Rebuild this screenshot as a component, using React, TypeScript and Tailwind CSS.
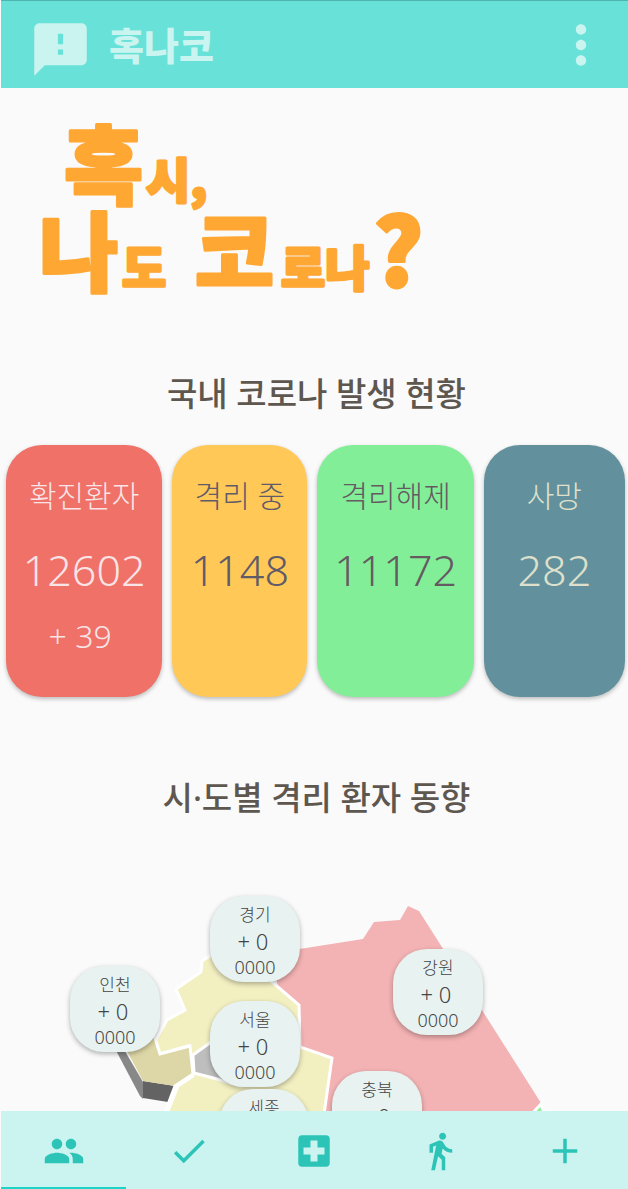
import {
  MdAdd,
  MdDirectionsWalk,
  MdDone,
  MdFeedback,
  MdLocalHospital,
  MdMoreVert,
  MdPeople,
} from "react-icons/md";
import type { IconType } from "react-icons";

const stats = [
  { label: "확진환자", value: "12602", delta: "+ 39", tone: "bg-[#ef7168] text-[#f8e4e6]" },
  { label: "격리 중", value: "1148", tone: "bg-[#ffc857] text-[#5f5b68]" },
  { label: "격리해제", value: "11172", tone: "bg-[#82ef98] text-[#655a62]" },
  { label: "사망", value: "282", tone: "bg-[#62919d] text-[#dfe0cc]" },
];

const regions = [
  { name: "경기", place: "left-[209px] top-0" },
  { name: "인천", place: "left-[69px] top-[70px]" },
  { name: "강원", place: "left-[392px] top-[53px]" },
  { name: "서울", place: "left-[209px] top-[105px]" },
  { name: "충북", place: "left-[331px] top-[175px]" },
  { name: "세종", place: "left-[218px] top-[193px]" },
];

const tabs: { label: string; Icon: IconType; active?: boolean }[] = [
  { label: "현황", Icon: MdPeople, active: true },
  { label: "자가진단", Icon: MdDone },
  { label: "진료소", Icon: MdLocalHospital },
  { label: "동선", Icon: MdDirectionsWalk },
  { label: "더보기", Icon: MdAdd },
];

function Logo() {
  return (
    <svg
      viewBox="0 0 400 180"
      className="ml-[31px] mt-8 block h-[180px] w-[400px] overflow-visible fill-[#ffa733] stroke-[#ffa733] font-['Noto_Sans_CJK_KR',sans-serif] font-black"
      strokeWidth="3"
      strokeLinejoin="round"
      role="img"
      aria-label="혹시, 나도 코로나?"
    >
      <text x="32" y="78" fontSize="86">혹</text>
      <text x="114" y="78" fontSize="48">시,</text>
      <text x="7" y="165" fontSize="86">나</text>
      <text x="90" y="166" fontSize="48">도</text>
      <text x="163" y="165" fontSize="86">코</text>
      <text x="249" y="166" fontSize="48">로나</text>
      <text x="341" y="167" fontSize="94">?</text>
    </svg>
  );
}

function StatCard({ label, value, delta, tone }: (typeof stats)[number]) {
  return (
    <div className={`flex h-[252px] flex-col items-center rounded-[36px] pt-[31px] shadow-[0_2px_4px_rgba(0,0,0,0.25)] ${tone}`}>
      <dt className="text-[30px] leading-[40px]">{label}</dt>
      <dd className="mt-6 text-[43px] leading-[60px]">{value}</dd>
      {delta && <dd className="mt-3 pr-2 text-[32px] leading-[48px]">{delta}</dd>}
    </div>
  );
}

function RegionBadge({ name, place }: (typeof regions)[number]) {
  return (
    <button
      type="button"
      className={`absolute flex h-[86px] w-[90px] flex-col items-center rounded-[34px] bg-[#e8f3f1] pt-[6px] text-[#444] shadow-[0_2px_5px_rgba(0,0,0,0.3)] ${place}`}
    >
      <span className="text-[17px] leading-[26px]">{name}</span>
      <span className="pr-1 text-[22px] leading-[26px]">+ 0</span>
      <span className="text-[18px] leading-[26px]">0000</span>
    </button>
  );
}

function RegionMap() {
  return (
    <div className="relative mt-[73px] h-[300px]">
      <svg viewBox="0 0 628 300" className="block h-[300px] w-[628px]" aria-hidden="true">
        <polygon
          points="270,57 305,52 362,43 373,26 399,24 407,10 418,15 540,207 560,300 320,300"
          fill="#f3b2b3"
        />
        <polygon points="540,208 527,222 520,300 570,300" fill="#90ee9c" stroke="#fff" strokeWidth="3" />
        <polygon
          points="201,65 215,56 270,85 298,109 299,151 331,162 322,225 310,300 130,300 167,215 177,190 192,180 187,150 159,158 154,145 166,124 184,114 175,93 200,76"
          fill="#f2efc1"
          stroke="#fff"
          strokeWidth="3"
        />
        <polygon points="110,145 121,150 142,186 142,203 139,200" fill="#888" />
        <polygon points="142,185 174,190 167,206 142,202" fill="#636363" />
        <polygon points="118,140 154,142 159,158 189,150 192,178 174,190 142,185" fill="#ddd6a6" />
        <polyline points="154,142 159,158 189,150 192,178 174,190 163,219" fill="none" stroke="#fff" strokeWidth="3" />
        <polygon
          points="192,159 210,146 260,145 280,165 240,190 216,183 193,177"
          fill="#bebebe"
          stroke="#fff"
          strokeWidth="3"
        />
      </svg>
      {regions.map((region) => (
        <RegionBadge key={region.name} {...region} />
      ))}
    </div>
  );
}

export default function App() {
  return (
    <div className="flex h-screen flex-col bg-[#fafafa] pl-px font-['Noto_Sans','Noto_Sans_CJK_KR',sans-serif] font-light">
      <header className="flex h-[88px] shrink-0 items-center border-t border-[#4db5ad] bg-[#68e2d8] pl-7 pr-4 text-[#caf4ef]">
        <MdFeedback className="mt-[10px] size-[63px]" aria-hidden="true" />
        <h1 className="ml-[17px] text-[38px] font-black leading-[48px]">혹나코</h1>
        <button type="button" aria-label="메뉴" className="ml-auto">
          <MdMoreVert className="size-[62px]" />
        </button>
      </header>

      <main className="min-h-0 flex-1 overflow-y-auto [scrollbar-width:none]">
        <Logo />
        <section>
          <h2 className="mt-[69px] pl-1 text-center text-[33px] font-medium leading-[50px] text-[#5e574f]">
            국내 코로나 발생 현황
          </h2>
          <dl className="mt-[26px] grid grid-cols-[156fr_135fr_156fr_141fr] gap-[10px] pl-[5px] pr-[3px]">
            {stats.map((stat) => (
              <StatCard key={stat.label} {...stat} />
            ))}
          </dl>
        </section>
        <section>
          <h2 className="mt-[76px] pl-1 text-center text-[33px] font-medium leading-[50px] text-[#5e574f]">
            시·도별 격리 환자 동향
          </h2>
          <RegionMap />
        </section>
      </main>

      <nav className="grid h-[78px] shrink-0 grid-cols-5 bg-[#cbf4f0] text-[#2cc4b7]">
        {tabs.map(({ label, Icon, active }) => (
          <a
            key={label}
            href="#"
            aria-label={label}
            aria-current={active ? "page" : undefined}
            className={`flex items-center justify-center border-b-2 pt-1 ${active ? "border-[#1bd3c7]" : "border-transparent"}`}
          >
            <Icon className="size-[42px]" />
          </a>
        ))}
      </nav>
    </div>
  );
}
